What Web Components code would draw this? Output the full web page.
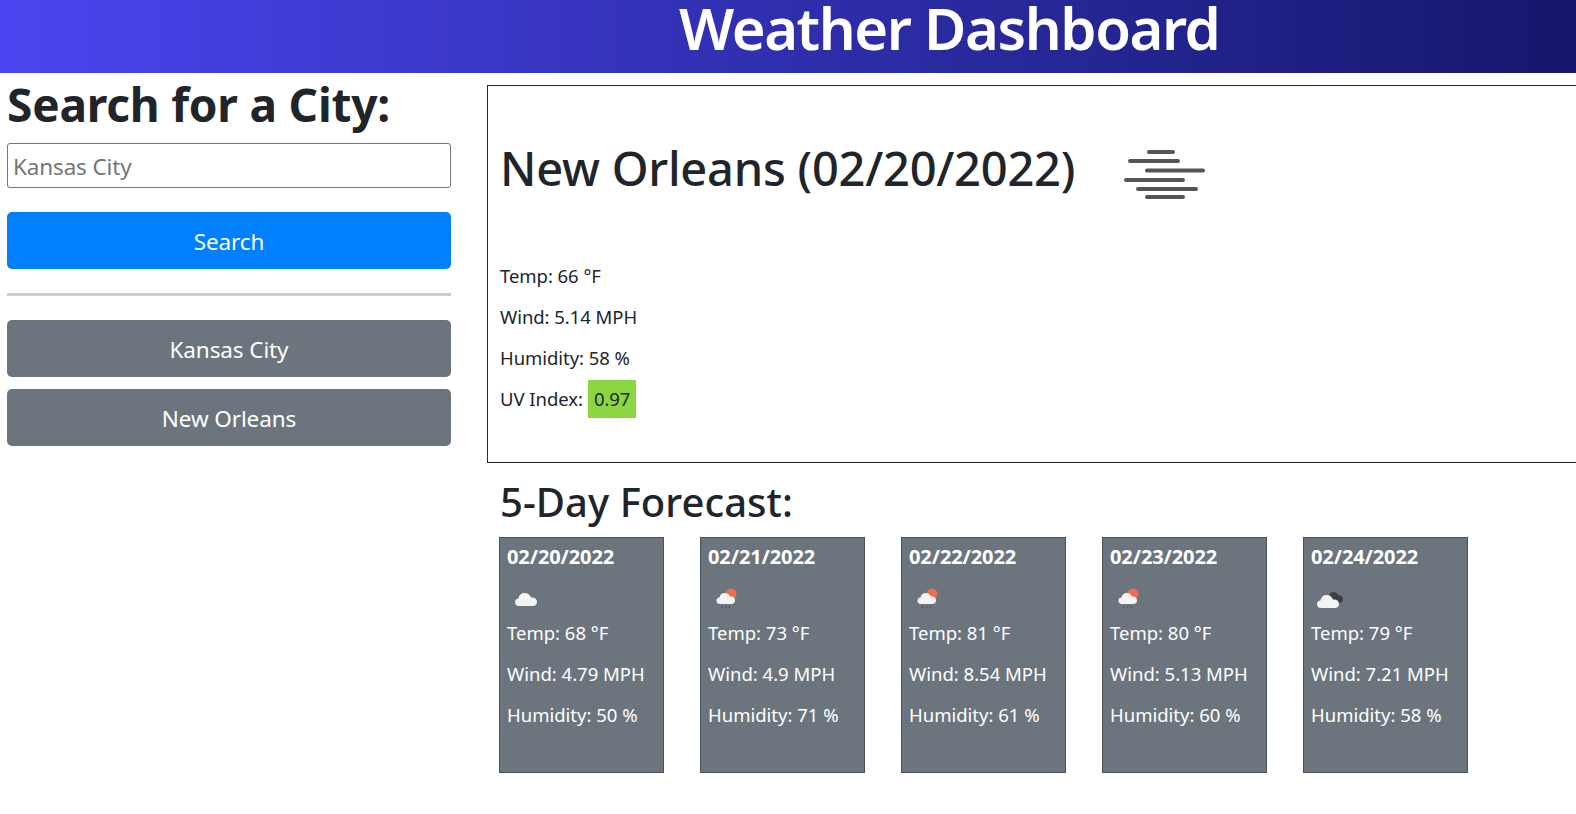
<!DOCTYPE html>
<html lang="en">
<head>
<meta charset="utf-8">
<title>Weather Dashboard</title>
<style>
html, body {
    margin: 0;
    height: 814px;
    overflow: hidden;
    background: #fff;
    color: #212529;
    font-family: "Noto Sans", "Open Sans", sans-serif;
    font-size: 18px;
}
</style>
</head>
<body>
<weather-app></weather-app>

<script>
(function () {
    const icons = {
        mist: `<svg width="84" height="52" viewBox="0 0 84 52" fill="none" stroke="#555" stroke-width="4" stroke-linecap="round">
            <path d="M26 2H50M7 11H55M24 20.500H80M3 30H60M15 39H73M24 47H60"/></svg>`,
        cloud: `<svg width="50" height="30" viewBox="6 0 50 30">
            <path fill="#f4f4f4" d="M18 24c-3 0-4-2-4-4s1.500-3.500 3.500-3.500c.5-3.500 3-5.500 6-5.500 3.500 0 5.500 2 6.500 4.500 3.500-.5 6 1.500 6 4.500 0 2.500-2 4-4 4z"/></svg>`,
        rain: `<svg width="50" height="30" viewBox="8 -1 50 30">
            <circle cx="31" cy="11" r="5.500" fill="#ee6e4d"/>
            <path fill="#f4f4f4" transform="translate(0 -1)" d="M20 22c-2.500 0-3.500-1.500-3.500-3.500s1.200-3 3-3c.5-3 2.500-4.500 5-4.500 3 0 4.500 1.500 5.500 3.500 3-.5 5 1 5 4 0 2.200-1.500 3.500-3.500 3.500z"/>
            <path stroke="#4a4f55" stroke-width="1" stroke-dasharray="2 2" d="M22 23l-1 3M26 23l-1 3M30 23l-1 3"/></svg>`,
        cloudy: `<svg width="50" height="30" viewBox="8 -1 50 30">
            <path fill="#3c3f43" transform="translate(0 -1)" d="M27 21c-3 0-4-2-4-4 0-2 1.500-3 3-3.500.5-2 2.500-3.500 4.500-3.500 2.500 0 4 1.500 4.500 3 2.500 0 5 1.500 5 4s-2 4-4 4z"/>
            <path fill="#f4f4f4" transform="translate(2 0)" d="M16 25c-3 0-4-2-4-4s1.500-3.500 3.500-3.500c.5-3.500 3-5.500 6-5.500 3.500 0 5.500 2 6.500 4.500 3.500-.5 6 1.500 6 4.500 0 2.500-2 4-4 4z"/></svg>`
    };

    class WeatherHeader extends HTMLElement {
        constructor() {
            super();
            this.attachShadow({ mode: 'open' }).innerHTML = `
<style>
:host {
    display: flex;
    box-sizing: border-box;
    height: 73px;
    align-items: center;
    padding: 0 0 17px 679px;
    background: linear-gradient(90deg, #4a45f0 0%, #2a2aa0 60%, #16166c 100%);
    color: #fff;
}
h1 { margin: 0; font-size: 58px; font-weight: 600; line-height: 56px; letter-spacing: -1.450px; }
</style>
<h1><slot></slot></h1>`;
        }
    }

    class AppButton extends HTMLElement {
        constructor() {
            super();
            this.attachShadow({ mode: 'open' }).innerHTML = `
<style>
:host {
    display: flex;
    box-sizing: border-box;
    height: 57px;
    padding-top: 2px;
    align-items: center;
    justify-content: center;
    border-radius: 5px;
    background: #6c757d;
    color: #fff;
    font-size: 22.500px;
    letter-spacing: -.1px;
    cursor: pointer;
}
:host([primary]) { background: #0080ff; }
</style>
<slot></slot>`;
        }
    }

    class CitySearch extends HTMLElement {
        constructor() {
            super();
            this.attachShadow({ mode: 'open' }).innerHTML = `
<style>
:host { display: flex; flex-direction: column; }
h2 { margin: 6px 0 14px; font-size: 46px; line-height: 50px; font-weight: 700; letter-spacing: -.2px; }
input {
    box-sizing: border-box;
    width: 100%;
    height: 45px;
    margin-bottom: 24px;
    padding: 2px 5px 0;
    border: 1px solid #767676;
    border-radius: 3px;
    font: 22.500px "Noto Sans", sans-serif;
    letter-spacing: -.15px;
}
input::placeholder { color: #757575; opacity: 1; }
hr { width: 100%; height: 3px; margin: 24px 0; border: 0; background: #ccc; }
.history { display: flex; flex-direction: column; gap: 12px; }
</style>
<h2>Search for a City:</h2>
<input type="text" placeholder="Kansas City">
<app-button primary>Search</app-button>
<hr>
<div class="history"><slot></slot></div>`;
        }
    }

    class CurrentWeather extends HTMLElement {
        constructor() {
            super();
            this.attachShadow({ mode: 'open' }).innerHTML = `
<style>
:host {
    display: block;
    box-sizing: border-box;
    height: 378px;
    padding: 0 12px;
    border: 1px solid #212529;
    border-right: 0;
}
.title { display: flex; align-items: center; gap: 48px; height: 164px; }
.title svg { flex: none; margin-top: 16px; }
h2 { margin: 0; font-size: 47px; line-height: 56px; font-weight: 500; letter-spacing: -.25px; }
.stats { display: flex; flex-direction: column; gap: 14px; margin-top: 12px; font-size: 18.500px; letter-spacing: -.05px; }
.stats div { height: 27px; line-height: 27px; }
.uv { display: flex; align-items: center; gap: 5px; }
.uv span {
    display: block;
    height: 38px;
    padding: 0 6px;
    line-height: 38px;
    background: #8bd640;
}
</style>
<div class="title"><h2><slot name="title"></slot></h2>${icons.mist}</div>
<div class="stats">
    <div>Temp: 66 °F</div>
    <div>Wind: 5.14 MPH</div>
    <div>Humidity: 58 %</div>
    <div class="uv">UV Index: <span>0.97</span></div>
</div>`;
        }
    }

    class ForecastCard extends HTMLElement {
        constructor() {
            super();
            const d = this.dataset;
            this.attachShadow({ mode: 'open' }).innerHTML = `
<style>
:host {
    display: block;
    box-sizing: border-box;
    width: 165px;
    height: 236px;
    padding: 5px 7px;
    border: 1px solid #4a5159;
    background: #6c757d;
    color: #fff;
    font-size: 18.500px;
    letter-spacing: 0;
}
h3 { margin: 0; font-size: 20px; line-height: 28px; font-weight: 700; letter-spacing: -.1px; }
svg { display: block; margin: 11px 0 7px; }
p { margin: 0 0 14px; height: 27px; line-height: 27px; white-space: nowrap; }
</style>
<h3>${d.date}</h3>
${icons[d.icon]}
<p>Temp: ${d.temp} °F</p>
<p>Wind: ${d.wind} MPH</p>
<p>Humidity: ${d.hum} %</p>`;
        }
    }

    class WeatherApp extends HTMLElement {
        constructor() {
            super();
            this.attachShadow({ mode: 'open' }).innerHTML = `
<style>
:host { display: block; }
.page { display: grid; grid-template-columns: 444px 1fr; column-gap: 36px; padding-left: 7px; }
.main { padding-top: 12px; }
h2 { margin: 14px 0 10px 13px; font-size: 40px; line-height: 50px; font-weight: 500; letter-spacing: .05px; }
.cards { display: flex; gap: 36px; margin-left: 12px; }
</style>
<weather-header>Weather Dashboard</weather-header>
<div class="page">
    <city-search>
        <app-button>Kansas City</app-button>
        <app-button>New Orleans</app-button>
    </city-search>
    <div class="main">
        <current-weather><span slot="title">New Orleans (02/20/2022)</span></current-weather>
        <h2>5-Day Forecast:</h2>
        <div class="cards">
            <forecast-card data-date="02/20/2022" data-icon="cloud" data-temp="68" data-wind="4.79" data-hum="50"></forecast-card>
            <forecast-card data-date="02/21/2022" data-icon="rain" data-temp="73" data-wind="4.9" data-hum="71"></forecast-card>
            <forecast-card data-date="02/22/2022" data-icon="rain" data-temp="81" data-wind="8.54" data-hum="61"></forecast-card>
            <forecast-card data-date="02/23/2022" data-icon="rain" data-temp="80" data-wind="5.13" data-hum="60"></forecast-card>
            <forecast-card data-date="02/24/2022" data-icon="cloudy" data-temp="79" data-wind="7.21" data-hum="58"></forecast-card>
        </div>
    </div>
</div>`;
        }
    }

    customElements.define('weather-header', WeatherHeader);
    customElements.define('app-button', AppButton);
    customElements.define('city-search', CitySearch);
    customElements.define('current-weather', CurrentWeather);
    customElements.define('forecast-card', ForecastCard);
    customElements.define('weather-app', WeatherApp);
})();
</script>
</body>
</html>
